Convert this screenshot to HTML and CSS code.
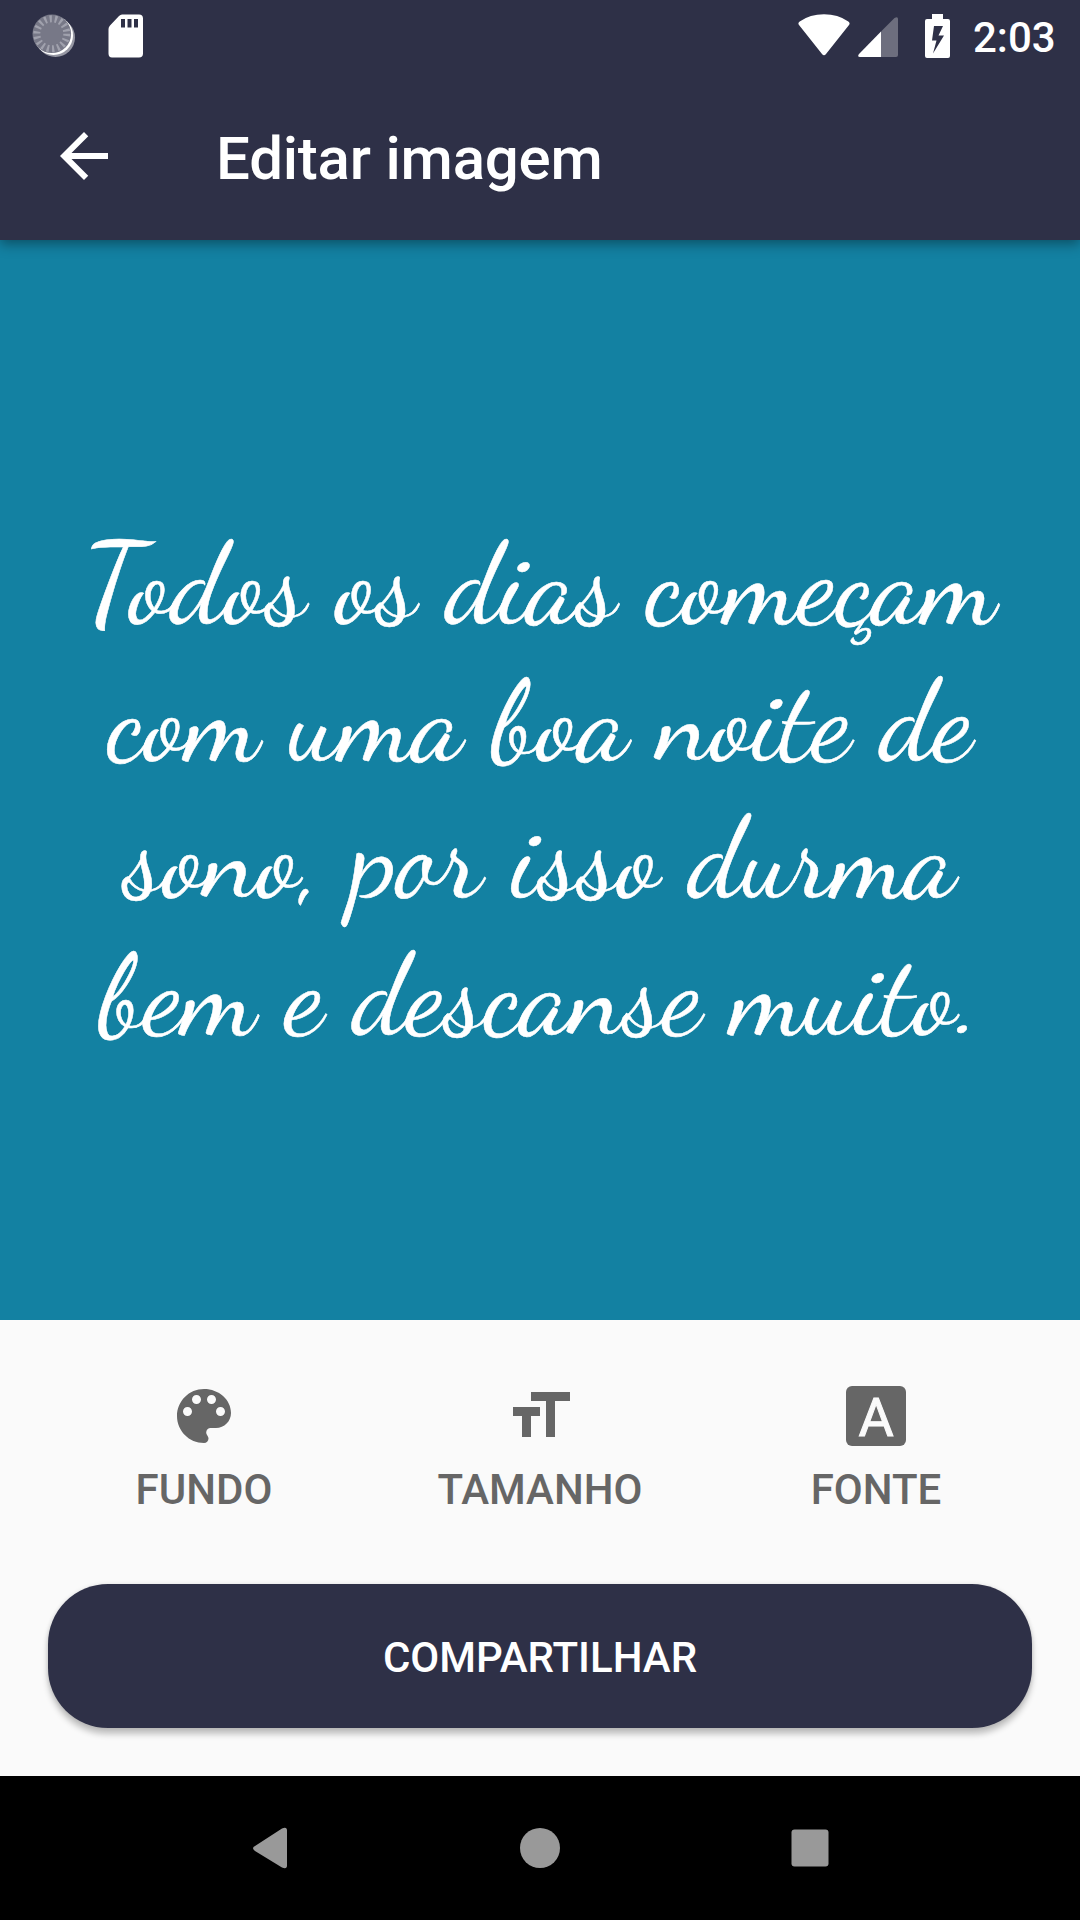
FILE: index.html
```html
<!DOCTYPE html>
<html lang="pt-BR">
<head>
<meta charset="utf-8">
<title>Editar imagem</title>
<link rel="stylesheet" href="styles.css">
</head>
<body>
<div class="screen">
  <header class="header">
    <div class="status-bar">
      <div class="status-group">
        <svg class="sync" viewBox="0 0 44 44">
          <circle cx="23.500" cy="23.500" r="19.500" fill="#9697a3"/>
          <circle cx="21.500" cy="21.500" r="19.500" fill="#fff"/>
          <circle cx="19.800" cy="19.800" r="19.300" fill="#777887"/>
          <circle cx="19.800" cy="19.800" r="15" fill="none" stroke="#a0a1ad" stroke-width="7" stroke-dasharray="2.2 3.035"/>
        </svg>
        <svg class="sd-card" viewBox="0 0 36 44">
          <path fill="#fff" fill-rule="evenodd" d="M14 .5H31Q35 .5 35 4.500V39.500Q35 43.500 31 43.500H4Q.5 43.500 .5 39.500V15Q.5 13 2 11.500L11 2Q12.500 .5 14 .5ZM13 5v8.500h4V5ZM19.500 5v8.500h4V5ZM26 5v8.500h4V5Z"/>
        </svg>
      </div>
      <div class="status-group">
        <svg class="wifi" viewBox="0 0 52 42"><path fill="#fff" d="M1 11Q-.5 9 1.700 7.500Q12 .3 26 .3T50.300 7.500Q52.500 9 51 11L28 40Q26 42.500 24 40Z"/></svg>
        <svg class="signal" viewBox="0 0 40 40"><path fill="#6d6e7e" d="M23 14.500 36.500 1Q40-1 40 2V38Q40 40 38 40H23Z"/><path fill="#fff" d="M23 14.500V40H2Q-1 40 1 37Z"/></svg>
        <svg class="battery" viewBox="0 0 25 44"><path fill="#fff" fill-rule="evenodd" d="M7 0H18V5H23Q25 5 25 7V42Q25 44 23 44H2Q0 44 0 42V7Q0 5 2 5H7ZM9 12 7 26.500H11.500L8 39.500 19 21.500H13.500L18 12Z"/></svg>
        <span class="clock">2:03</span>
      </div>
    </div>
    <div class="app-bar">
      <svg class="back" viewBox="0 0 24 24"><path fill="#fff" d="M20 11H7.830l5.590-5.590L12 4l-8 8 8 8 1.410-1.410L7.830 13H20v-2z"/></svg>
      <h1 class="title">Editar imagem</h1>
    </div>
  </header>

  <main class="preview">
    <p class="quote">Todos os dias começam<br>com uma boa noite de<br>sono, por isso durma<br>bem e descanse muito.</p>
  </main>

  <section class="controls">
    <div class="options">
      <div class="option">
        <svg class="option-icon" viewBox="0 0 24 24"><path d="M12 3c-4.970 0-9 4.030-9 9s4.030 9 9 9c.83 0 1.500-.67 1.500-1.500 0-.39-.15-.74-.39-1.010-.23-.26-.38-.61-.38-.99 0-.83.67-1.500 1.500-1.500H16c2.760 0 5-2.240 5-5 0-4.420-4.030-8-9-8zm-5.500 9c-.83 0-1.500-.67-1.500-1.500S5.670 9 6.500 9 8 9.670 8 10.500 7.330 12 6.500 12zm3-4C8.670 8 8 7.330 8 6.500S8.670 5 9.500 5s1.500.67 1.500 1.500S10.330 8 9.500 8zm5 0c-.83 0-1.500-.67-1.500-1.500S13.670 5 14.500 5s1.500.67 1.500 1.500S15.330 8 14.500 8zm3 4c-.83 0-1.500-.67-1.500-1.500S16.670 9 17.500 9s1.500.67 1.500 1.500-.67 1.500-1.500 1.500z"/></svg>
        <span>FUNDO</span>
      </div>
      <div class="option">
        <svg class="option-icon" viewBox="0 0 24 24"><path d="M9 4v3h5v12h3V7h5V4H9zm-6 8h3v7h3v-7h3V9H3v3z"/></svg>
        <span>TAMANHO</span>
      </div>
      <div class="option">
        <svg class="option-icon" viewBox="0 0 72 72"><rect x="6" y="6" width="60" height="60" rx="6"/><text class="icon-letter" x="36" y="55.500">A</text></svg>
        <span>FONTE</span>
      </div>
    </div>
    <button class="share">COMPARTILHAR</button>
  </section>

  <nav class="nav-bar">
    <svg viewBox="0 0 44 44"><path d="M7 20 34 2.500Q39 .5 39 4.500V39.500Q39 43.500 34 41.500L7 25Q3 22 7 20Z"/></svg>
    <svg viewBox="0 0 44 44"><circle cx="22" cy="22" r="20"/></svg>
    <svg viewBox="0 0 44 44"><rect x="3.500" y="3.500" width="37" height="37" rx="3"/></svg>
  </nav>
</div>
</body>
</html>
```
FILE: styles.css
```css
* { box-sizing: border-box; }
body { margin: 0; font-family: Roboto, sans-serif; }
svg { display: block; flex: none; }

.screen {
  width: 1080px;
  height: 1920px;
  display: grid;
  grid-template-columns: 1080px;
  grid-template-rows: 240px 1080px 456px 144px;
  overflow: hidden;
  background: #fafafa;
}

.header {
  position: relative;
  z-index: 1;
  background: #2e3047;
  color: #fff;
  box-shadow: 0 4px 12px rgba(0, 0, 0, .38);
}
.status-bar {
  height: 72px;
  display: flex;
  justify-content: space-between;
  padding: 14px 25px 0 32px;
}
.status-group { display: flex; align-items: flex-start; }
.sync { width: 44px; height: 44px; }
.sd-card { width: 36px; height: 44px; margin-left: 32px; }
.wifi { width: 52px; height: 42px; }
.signal { width: 40px; height: 40px; margin: 3px 27px 0 8px; }
.battery { width: 25px; height: 44px; }
.clock {
  width: 82px;
  margin-left: 23px;
  font-size: 42px;
  font-weight: 500;
  line-height: 47px;
}

.app-bar {
  height: 168px;
  display: flex;
  align-items: center;
  padding-left: 48px;
}
.back { width: 72px; height: 72px; }
.title {
  margin: 6px 0 0 96px;
  font-size: 60px;
  font-weight: 500;
  line-height: 72px;
  letter-spacing: -.2px;
}

.preview {
  display: flex;
  align-items: center;
  justify-content: center;
  padding-top: 20px;
  background: #1381a2;
}
.quote {
  margin: 0;
  font-family: "Dancing Script", "Liberation Serif", cursive;
  font-size: 114px;
  font-weight: 450;
  line-height: 137px;
  text-align: center;
  white-space: nowrap;
  color: #fff;
  -webkit-text-stroke: .5px #fff;
}

.controls {
  display: flex;
  flex-direction: column;
  justify-content: space-between;
  padding: 60px 48px 48px;
}
.options {
  display: grid;
  grid-template-columns: repeat(3, 336px);
  justify-content: center;
}
.option {
  display: flex;
  flex-direction: column;
  align-items: center;
  gap: 13px;
  color: #666;
  font-size: 42px;
  font-weight: 500;
  line-height: 50px;
}
.option-icon { width: 72px; height: 72px; fill: #666; }
.icon-letter {
  font-size: 54px;
  font-weight: 400;
  text-anchor: middle;
  fill: #fafafa;
  stroke: #fafafa;
  stroke-width: 1px;
}
.share {
  height: 144px;
  padding: 3px 0 0;
  border: 0;
  border-radius: 60px;
  background: #2e3047;
  color: #fff;
  font: 500 42px/50px Roboto, sans-serif;
  box-shadow: 0 6px 6px rgba(0, 0, 0, .24), 0 0 4px rgba(0, 0, 0, .1);
}

.nav-bar {
  display: grid;
  grid-template-columns: repeat(3, 270px);
  place-content: center;
  justify-items: center;
  background: #000;
}
.nav-bar svg { width: 44px; height: 44px; fill: #999; }
```
